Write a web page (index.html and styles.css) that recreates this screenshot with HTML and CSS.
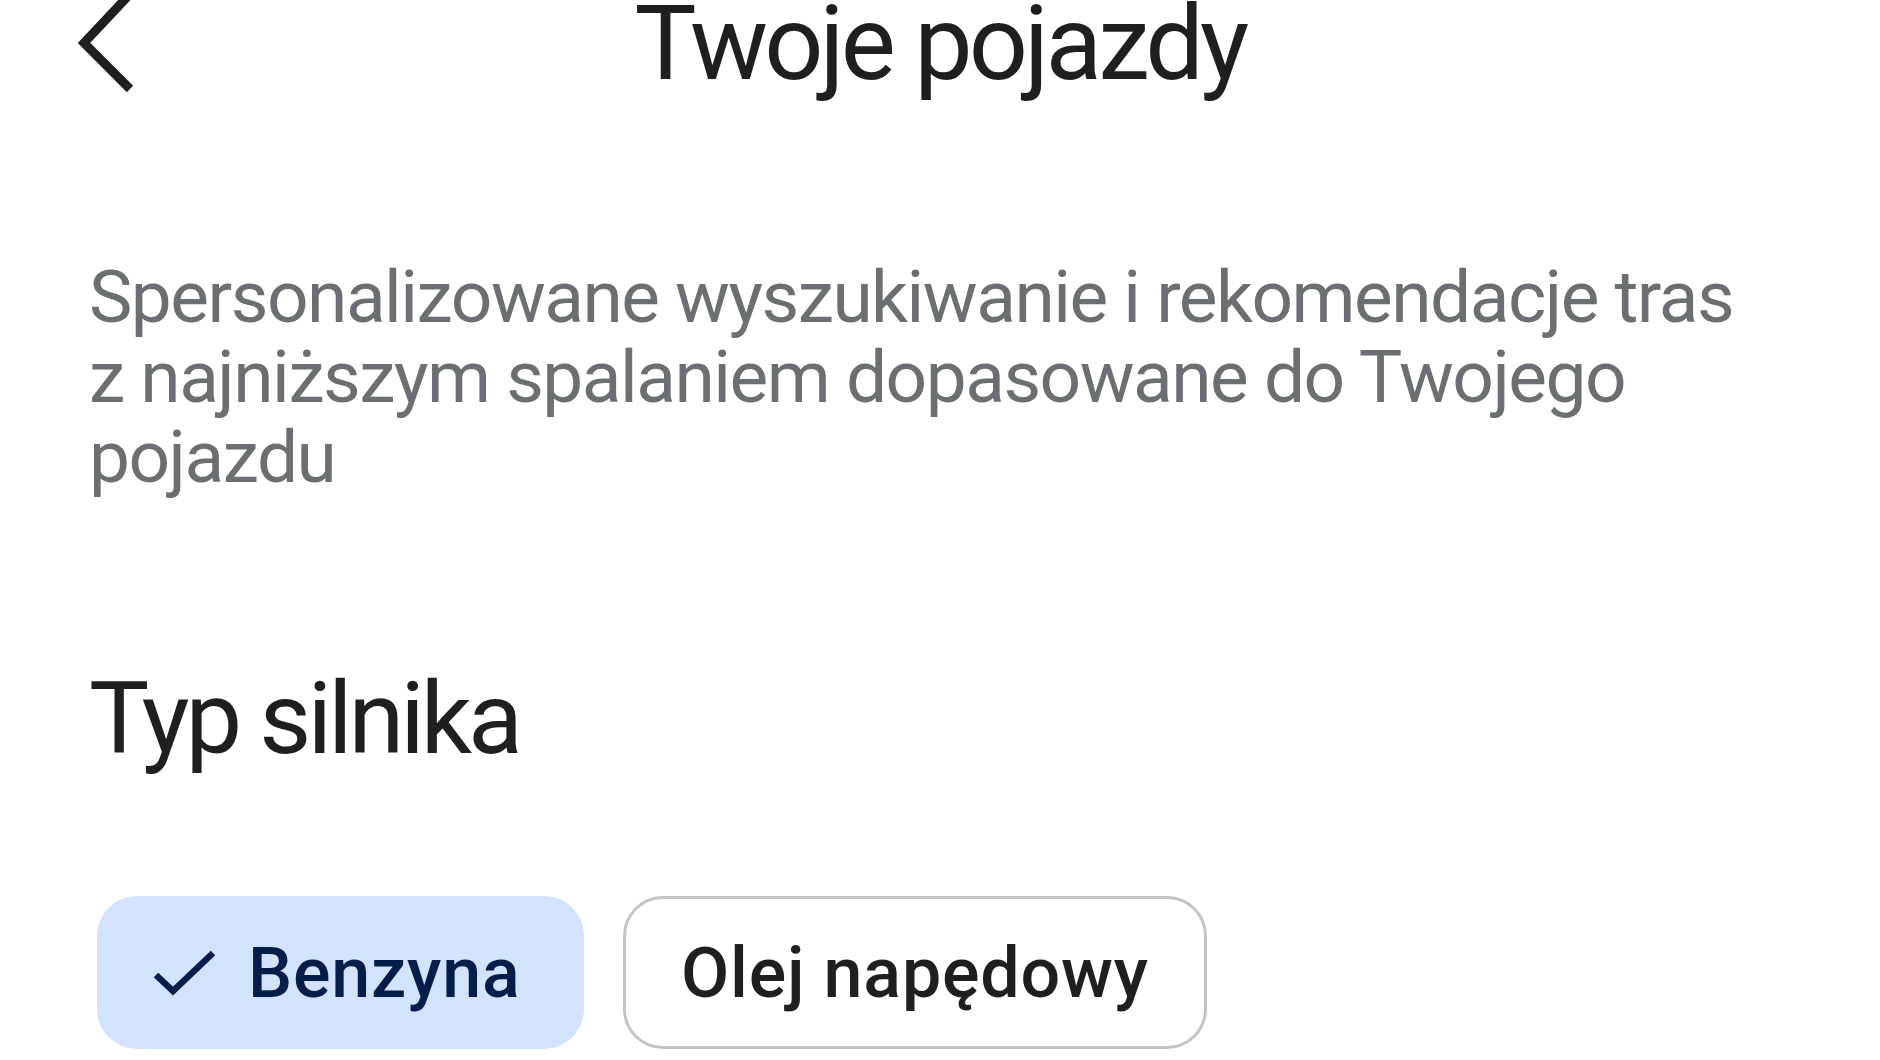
FILE: index.html
```html
<!DOCTYPE html>
<html lang="pl">
<head>
<meta charset="utf-8">
<title>Twoje pojazdy</title>
<link rel="stylesheet" href="styles.css">
</head>
<body>
<div class="page">
  <header class="topbar">
    <button class="back" aria-label="Wstecz">
      <svg viewBox="0 0 80 100" width="80" height="100"><path d="M60 -6 L14 43 L60 89" fill="none" stroke="#1f1f1f" stroke-width="9" stroke-linecap="butt" stroke-linejoin="miter"/></svg>
    </button>
    <h1 class="title">Twoje pojazdy</h1>
  </header>
  <p class="desc">Spersonalizowane wyszukiwanie i rekomendacje tras z najniższym spalaniem dopasowane do Twojego pojazdu</p>
  <h2 class="section">Typ silnika</h2>
  <div class="chips">
    <button class="chip chip-selected">
      <svg class="check" viewBox="0 0 64 48" width="64" height="48"><path d="M5 26 L22 42 L62 4" fill="none" stroke="#041e49" stroke-width="6.5"/></svg>
      <span>Benzyna</span>
    </button>
    <button class="chip chip-outline"><span>Olej napędowy</span></button>
  </div>
</div>
</body>
</html>
```
FILE: styles.css
```css
html, body {
  margin: 0;
  padding: 0;
  background: #ffffff;
}
body {
  font-family: Roboto, "Noto Sans", sans-serif;
  color: #1f1f1f;
  overflow: hidden;
  height: 1060px;
}
.page {
  display: flex;
  flex-direction: column;
}
.topbar {
  position: relative;
  display: flex;
  justify-content: center;
  align-items: flex-start;
  height: 120px;
  margin-top: -8px;
}
.back {
  position: absolute;
  left: 70px;
  top: 8px;
  border: 0;
  padding: 0;
  background: none;
}
.back svg { display: block; }
.title {
  margin: 0;
  font-size: 104px;
  font-weight: 400;
  line-height: 1;
  letter-spacing: -3.8px;
  color: #1f1f1f;
}
.desc {
  margin: 145px 0 0 89px;
  max-width: 1665px;
  font-size: 73px;
  line-height: 80px;
  letter-spacing: -1.5px;
  color: #6b6e72;
}
.section {
  margin: 161px 0 0 89px;
  font-size: 101px;
  font-weight: 400;
  line-height: 1.2;
  letter-spacing: -4px;
  color: #1f1f1f;
}
.chips {
  display: flex;
  gap: 39px;
  margin: 117px 0 0 97px;
}
.chip {
  display: flex;
  align-items: center;
  height: 153px;
  border-radius: 40px;
  font-family: Roboto, "Noto Sans", sans-serif;
  font-size: 70px;
  font-weight: 500;
  letter-spacing: 0.8px;
  box-sizing: border-box;
}
.chip-selected {
  width: 487px;
  padding: 0 0 0 54px;
  gap: 33px;
  background: #d3e3fd;
  color: #041e49;
  border: 0;
}
.chip-outline {
  width: 584px;
  justify-content: center;
  background: #fff;
  color: #1f1f1f;
  border: 3px solid #c4c4c4;
}
```
